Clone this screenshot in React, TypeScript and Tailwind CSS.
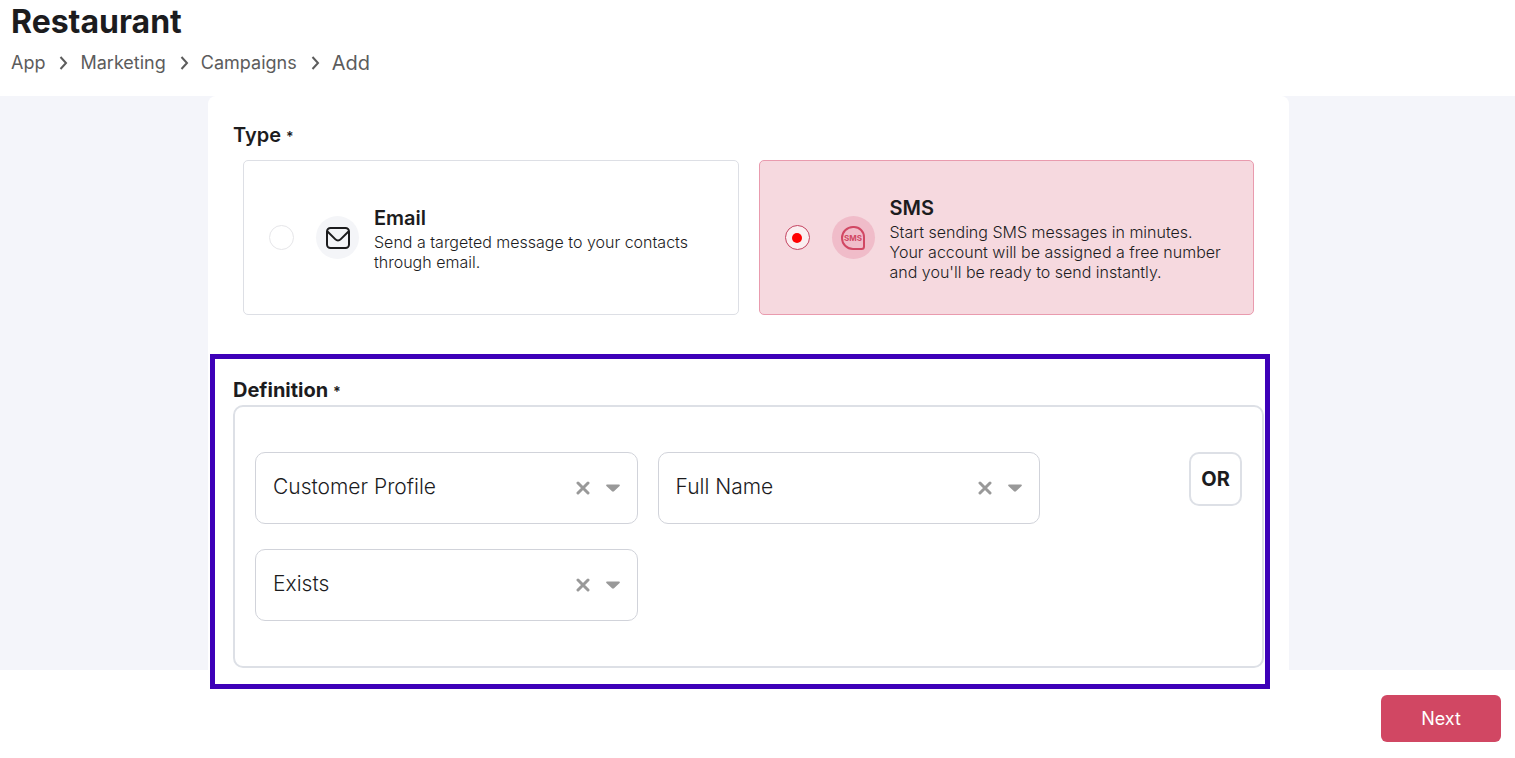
import { useState, type ReactNode } from 'react';

const breadcrumbs = ['App', 'Marketing', 'Campaigns'];

const campaignTypes = [
    {
        id: 'email',
        title: 'Email',
        lines: ['Send a targeted message to your contacts', 'through email.'],
    },
    {
        id: 'sms',
        title: 'SMS',
        lines: [
            'Start sending SMS messages in minutes.',
            'Your account will be assigned a free number',
            "and you'll be ready to send instantly.",
        ],
    },
];

const conditionFields = [
    { label: 'Source', options: ['Customer Profile', 'Orders'] },
    { label: 'Field', options: ['Full Name', 'Phone Number'] },
    { label: 'Operator', options: ['Exists', 'Does not exist'] },
];

function ChevronIcon() {
    return (
        <svg width="9" height="14" viewBox="0 0 9 14" fill="none" stroke="#5c5c5c" strokeWidth="2" aria-hidden="true">
            <path d="M1.5 1l5.5 6-5.5 6" />
        </svg>
    );
}

function MailIcon() {
    return (
        <svg width="24" height="22" viewBox="0 0 24 22" fill="none" stroke="#1c1c1e" strokeWidth="2" strokeLinejoin="round" aria-hidden="true">
            <rect x="1" y="1" width="22" height="20" rx="3.5" />
            <path d="M1.5 4.500l7.700 7.600c1.800 1.800 3.800 1.800 5.600 0l7.700-7.600" />
        </svg>
    );
}

function SmsIcon() {
    return (
        <svg width="24" height="24" viewBox="0 0 24 24" fill="none" aria-hidden="true">
            <path d="M12 1h1a10 10 0 0 1 10 10v9.5a2.5 2.5 0 0 1-2.5 2.5H12a11 11 0 0 1 0-22z" stroke="#d14763" strokeWidth="2" />
            <text x="12" y="15" textAnchor="middle" fontSize="8" fontWeight="700" fill="#d14763">SMS</text>
        </svg>
    );
}

function SelectField({ label, options }: { label: string; options: string[] }) {
    const [value, setValue] = useState(options[0]);

    return (
        <div className="relative">
            <select
                aria-label={label}
                value={value}
                onChange={(e) => setValue(e.target.value)}
                className="w-full h-[72px] appearance-none rounded-[10px] border border-[#d1d3da] bg-white pl-[17px] pr-20 pb-0.5 text-[21px] font-light text-[#1c1c1e]"
            >
                <option value=""></option>
                {options.map((option) => (
                    <option key={option}>{option}</option>
                ))}
            </select>
            <div className="absolute inset-y-0 right-[18px] flex items-center gap-4 pointer-events-none">
                <button type="button" aria-label={`Clear ${label}`} className="pointer-events-auto" onClick={() => setValue('')}>
                    <svg width="14" height="14" viewBox="0 0 14 14" stroke="#999999" strokeWidth="3" strokeLinecap="round" aria-hidden="true">
                        <path d="M2 2l10 10M12 2L2 12" />
                    </svg>
                </button>
                <svg width="14" height="8" viewBox="0 0 14 8" fill="#999999" aria-hidden="true">
                    <path d="M1 .5h12c.8 0 1.200.8.600 1.400L8 7.200c-.6.6-1.400.6-2 0L.4 1.900C-.2 1.300.2.5 1 .5z" />
                </svg>
            </div>
        </div>
    );
}

function RequiredLabel({ children }: { children: ReactNode }) {
    return (
        <>
            {children} <span className="text-[14px]">*</span>
        </>
    );
}

export default function App() {
    const [type, setType] = useState('sms');

    return (
        <div className="bg-white font-['Inter','Liberation_Sans',sans-serif] text-[#1c1c1e]">
            <header className="h-24 px-[11px]">
                <h1 className="pt-1 text-[32px] leading-9 font-bold">Restaurant</h1>
                <nav aria-label="Breadcrumb" className="mt-2">
                    <ol className="flex items-center text-[18px] leading-[30px] text-[#5c5c5c]">
                        {breadcrumbs.map((crumb) => (
                            <li key={crumb} className="flex items-center">
                                <a href="#">{crumb}</a>
                                <span className="ml-3.5 mr-3">
                                    <ChevronIcon />
                                </span>
                            </li>
                        ))}
                        <li aria-current="page" className="text-[20px]">Add</li>
                    </ol>
                </nav>
            </header>

            <main className="bg-[#f4f5fa] pl-52 pr-[226px]">
                <div className="rounded-t-lg bg-white px-[25px] pt-6 pb-0.5">
                    <fieldset>
                        <legend className="text-[20px] leading-[30px] font-semibold">
                            <RequiredLabel>Type</RequiredLabel>
                        </legend>
                        <div className="grid grid-cols-2 gap-5 px-2.5 pt-2">
                            {campaignTypes.map((item) => (
                                <label
                                    key={item.id}
                                    className="flex h-[155px] items-center rounded-[5px] border border-[#dddfe5] px-[25px] has-checked:border-[#e99bae] has-checked:bg-[#f6d9df]"
                                >
                                    <input
                                        type="radio"
                                        name="campaign-type"
                                        value={item.id}
                                        checked={type === item.id}
                                        onChange={() => setType(item.id)}
                                        className="grid size-[25px] shrink-0 appearance-none place-items-center rounded-full border border-[#e6e6e9] bg-white checked:border-[#c44360] checked:bg-[#fbeef0] checked:before:size-2.5 checked:before:rounded-full checked:before:bg-[#ff0000]"
                                    />
                                    <span
                                        className={`ml-[22px] flex size-[43px] shrink-0 items-center justify-center rounded-full ${
                                            type === item.id ? 'bg-[#f0bcc9]' : 'bg-[#f4f5f8]'
                                        }`}
                                    >
                                        {item.id === 'email' ? <MailIcon /> : <SmsIcon />}
                                    </span>
                                    <span className="ml-[15px] whitespace-nowrap">
                                        <span className="block text-[20px] leading-7 font-semibold">{item.title}</span>
                                        {item.lines.map((line) => (
                                            <span key={line} className="block text-[16px] leading-5 font-light">{line}</span>
                                        ))}
                                    </span>
                                </label>
                            ))}
                        </div>
                    </fieldset>

                    <section aria-labelledby="definition-title" className="relative mt-[62px]">
                        <h2 id="definition-title" className="text-[20px] leading-[26px] font-bold">
                            <RequiredLabel>Definition</RequiredLabel>
                        </h2>
                        <div className="flex items-start rounded-[10px] border-2 border-[#dde0e6] px-5 py-[45px]">
                            <div className="mr-[149px] grid flex-1 grid-cols-2 gap-x-5 gap-y-[25px]">
                                {conditionFields.map((field) => (
                                    <SelectField key={field.label} {...field} />
                                ))}
                            </div>
                            <button type="button" className="h-[54px] w-[53px] rounded-[10px] border-2 border-[#dde0e6] text-[20px] font-bold">
                                OR
                            </button>
                        </div>
                        {/* Highlight frame */}
                        <div className="pointer-events-none absolute -top-[23px] -right-1.5 -bottom-[21px] -left-[23px] border-[5px] border-[#3d00b8]" />
                    </section>
                </div>
            </main>

            <footer className="flex justify-end px-3.5 pt-[25px] pb-4">
                <button type="button" className="h-[47px] w-[120px] rounded-md bg-[#d14763] text-[18px] text-white">
                    Next
                </button>
            </footer>
        </div>
    );
}
